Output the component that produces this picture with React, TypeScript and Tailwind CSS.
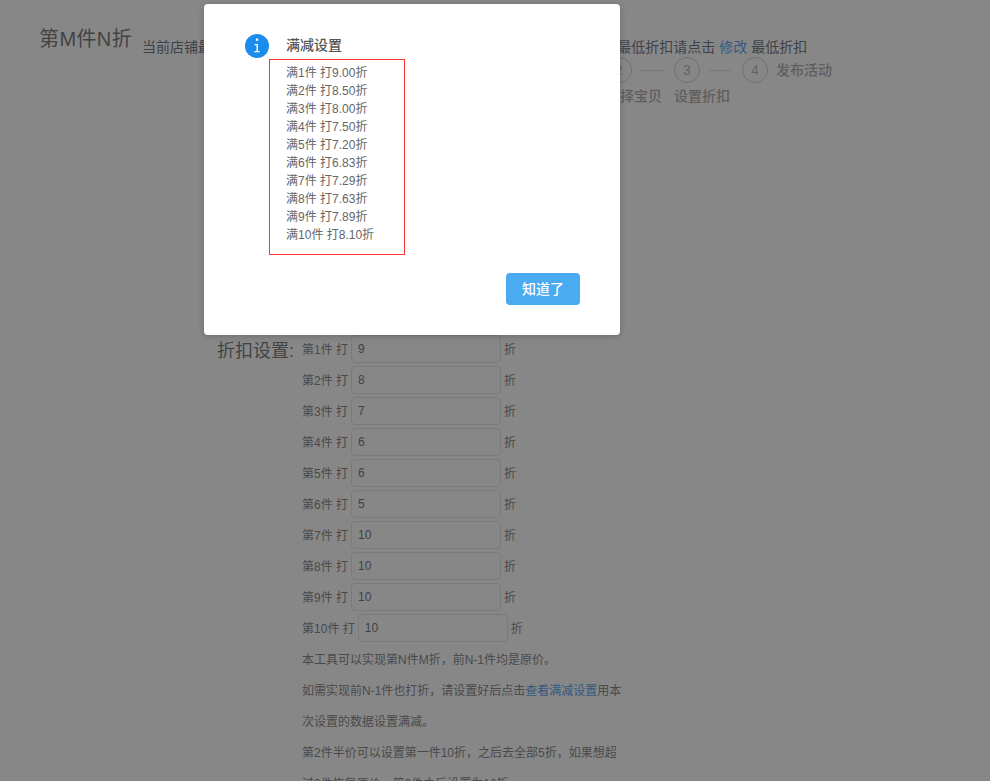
import React from 'react';

const discounts = ['9', '8', '7', '6', '6', '5', '10', '10', '10', '10'];
const tiers = ['9.00', '8.50', '8.00', '7.50', '7.20', '6.83', '7.29', '7.63', '7.89', '8.10'];

const Circle: React.FC<{ n: number }> = ({ n }) => (
  <div className="w-[26px] h-[26px] rounded-full border border-[#c8c8c8] flex items-center justify-center text-[14px] font-light text-[#aaaaaa] shrink-0">
    {n}
  </div>
);

const Line: React.FC = () => <div className="w-[24px] mr-[2px] h-px bg-[#dddddd] shrink-0" />;

const App: React.FC = () => {
  return (
    <div className="relative h-screen overflow-hidden bg-white text-[12px] text-[#666666] font-['Liberation_Sans','Noto_Sans_CJK_SC',sans-serif]">
      {/* page behind the mask */}
      <div className="pt-[25px] pl-[39px] flex items-start">
        <h1 className="text-[20px] tracking-[0.4px] leading-[28px] font-normal text-[#555555]">第M件N折</h1>
        <p className="ml-[10px] mt-[13px] text-[14px] leading-[18px] text-[#495060] whitespace-nowrap">
          当前店铺最低折扣：7.00折，如果您想要设置的活动折扣低于当前店铺设置的最低折扣请点击 <a className="text-[#2d8cf0]">修改</a> 最低折扣
        </p>
      </div>

      <div className="ml-[538px] mt-[1px] flex items-center gap-2">
        <Circle n={1} />
        <Line />
        <Circle n={2} />
        <Line />
        <Circle n={3} />
        <Line />
        <Circle n={4} />
        <span className="text-[14px] font-medium text-[#999999] whitespace-nowrap">发布活动</span>
      </div>
      <div className="mt-[3px] ml-[538px] flex gap-3 text-[14px] font-medium text-[#999999] leading-[20px]">
        <span>选择活动</span>
        <span>选择宝贝</span>
        <span>设置折扣</span>
      </div>

      <div className="mt-[229px] ml-[217px] flex">
        <div className="w-[85px] text-[18px] leading-[28px] pt-[2px] text-[#555555] whitespace-nowrap">折扣设置:</div>
        <div className="flex flex-col gap-[3px]">
          {discounts.map((d, i) => (
            <div key={i} className="flex items-center gap-[3px]">
              <span className="whitespace-pre pt-[2px]">第{i + 1}件 打</span>
              <input
                readOnly
                value={d}
                className="w-[150px] h-[28px] border border-[#dddee1] rounded-[4px] px-[6px] text-[12px] text-[#495060] outline-none"
              />
              <span className="pt-[2px]">折</span>
            </div>
          ))}
          <div className="w-[325px] leading-[31px]">
            <p>本工具可以实现第N件M折，前N-1件均是原价。</p>
            <p>
              如需实现前N-1件也打折，请设置好后点击<a className="text-[#2d8cf0]">查看满减设置</a>用本次设置的数据设置满减。
            </p>
            <p>第2件半价可以设置第一件10折，之后去全部5折，如果想超过3件恢复原价，第3件之后设置为10折。</p>
          </div>
        </div>
      </div>

      {/* mask + dialog */}
      <div className="absolute inset-0 bg-[rgba(55,55,55,0.6)]" />
      <div className="absolute left-[204px] top-[4px] w-[416px] h-[331px] bg-white rounded-[4px] shadow-[0_1px_6px_rgba(0,0,0,0.2)] pt-[30px] pl-[41px] pr-[40px]">
        <div className="flex items-center h-[24px]">
          <svg width="24" height="24" viewBox="0 0 24 24" className="shrink-0">
            <circle cx="12" cy="12" r="12" fill="#1a8cec" />
            <rect x="10.9" y="4.5" width="2.3" height="2.3" fill="#ffffff" />
            <path d="M9.6 9.9h3.3v7.1h1.7v1.3H9.4V17h2.1v-5.8H9.6z" fill="#ffffff" />
          </svg>
          <span className="ml-[17px] -mt-[2px] text-[14px] font-medium text-[#555555]">满减设置</span>
        </div>
        <div className="mt-px ml-[24px] w-[136px] h-[196px] border border-[#ff3333] pl-[16px] pt-[4px] leading-[18px] text-[#666666]">
          {tiers.map((t, i) => (
            <div key={i} className="whitespace-pre">
              满{i + 1}件 打{t}折
            </div>
          ))}
        </div>
        <div className="mt-[18px] flex justify-end">
          <button className="w-[74px] h-[32px] rounded-[4px] bg-[#4aabf0] text-white text-[14px] font-medium">知道了</button>
        </div>
      </div>
    </div>
  );
};

export default App;
